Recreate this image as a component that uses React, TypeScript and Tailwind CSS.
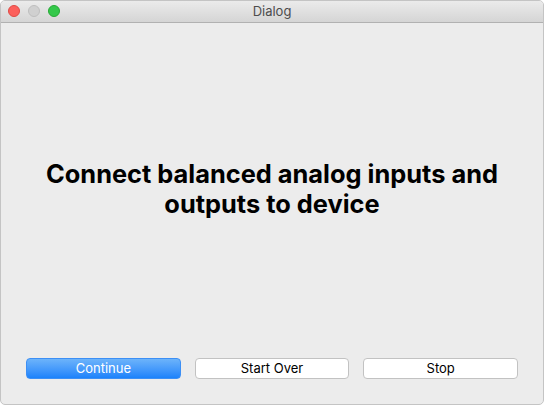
export default function App() {
  return (
    <div className="w-[544px] h-[405px] flex flex-col bg-[#ececec] overflow-hidden rounded-[5px] border border-[#c4c4c4] box-border" style={{ fontFamily: 'Inter, "Liberation Sans", sans-serif' }}>
      <div className="h-[22px] shrink-0 relative flex items-center justify-center bg-gradient-to-b from-[#ebebeb] to-[#d5d5d5] border-b border-[#b1b1b1]">
        <div className="absolute left-[7px] top-[4px] flex gap-[8px]">
          <div className="w-[12px] h-[12px] rounded-full bg-[#fc605c] border border-[#de4a45]" />
          <div className="w-[12px] h-[12px] rounded-full bg-[#d0d0d0] border border-[#bebebe]" />
          <div className="w-[12px] h-[12px] rounded-full bg-[#34c84a] border border-[#26a935]" />
        </div>
        <span className="text-[13px] text-[#4d4d4d]">Dialog</span>
      </div>
      <div className="flex-1 flex items-center justify-center pb-[4px]">
        <h1 className="text-[25.4px] leading-[30px] font-bold text-black text-center">
          Connect balanced analog inputs and<br />outputs to device
        </h1>
      </div>
      <div className="flex gap-[14px] px-[25px] pb-[25px] shrink-0">
        <button className="w-[155px] h-[21px] rounded-[4px] bg-gradient-to-b from-[#6cb3fa] to-[#1a82fb] text-white text-[13px] leading-none border border-[#3c8ff5]">Continue</button>
        <button className="w-[155px] h-[21px] rounded-[4px] bg-white text-black text-[13px] leading-none border border-[#c2c2c2]">Start Over</button>
        <button className="w-[155px] h-[21px] rounded-[4px] bg-white text-black text-[13px] leading-none border border-[#c2c2c2]">Stop</button>
      </div>
    </div>
  );
}
